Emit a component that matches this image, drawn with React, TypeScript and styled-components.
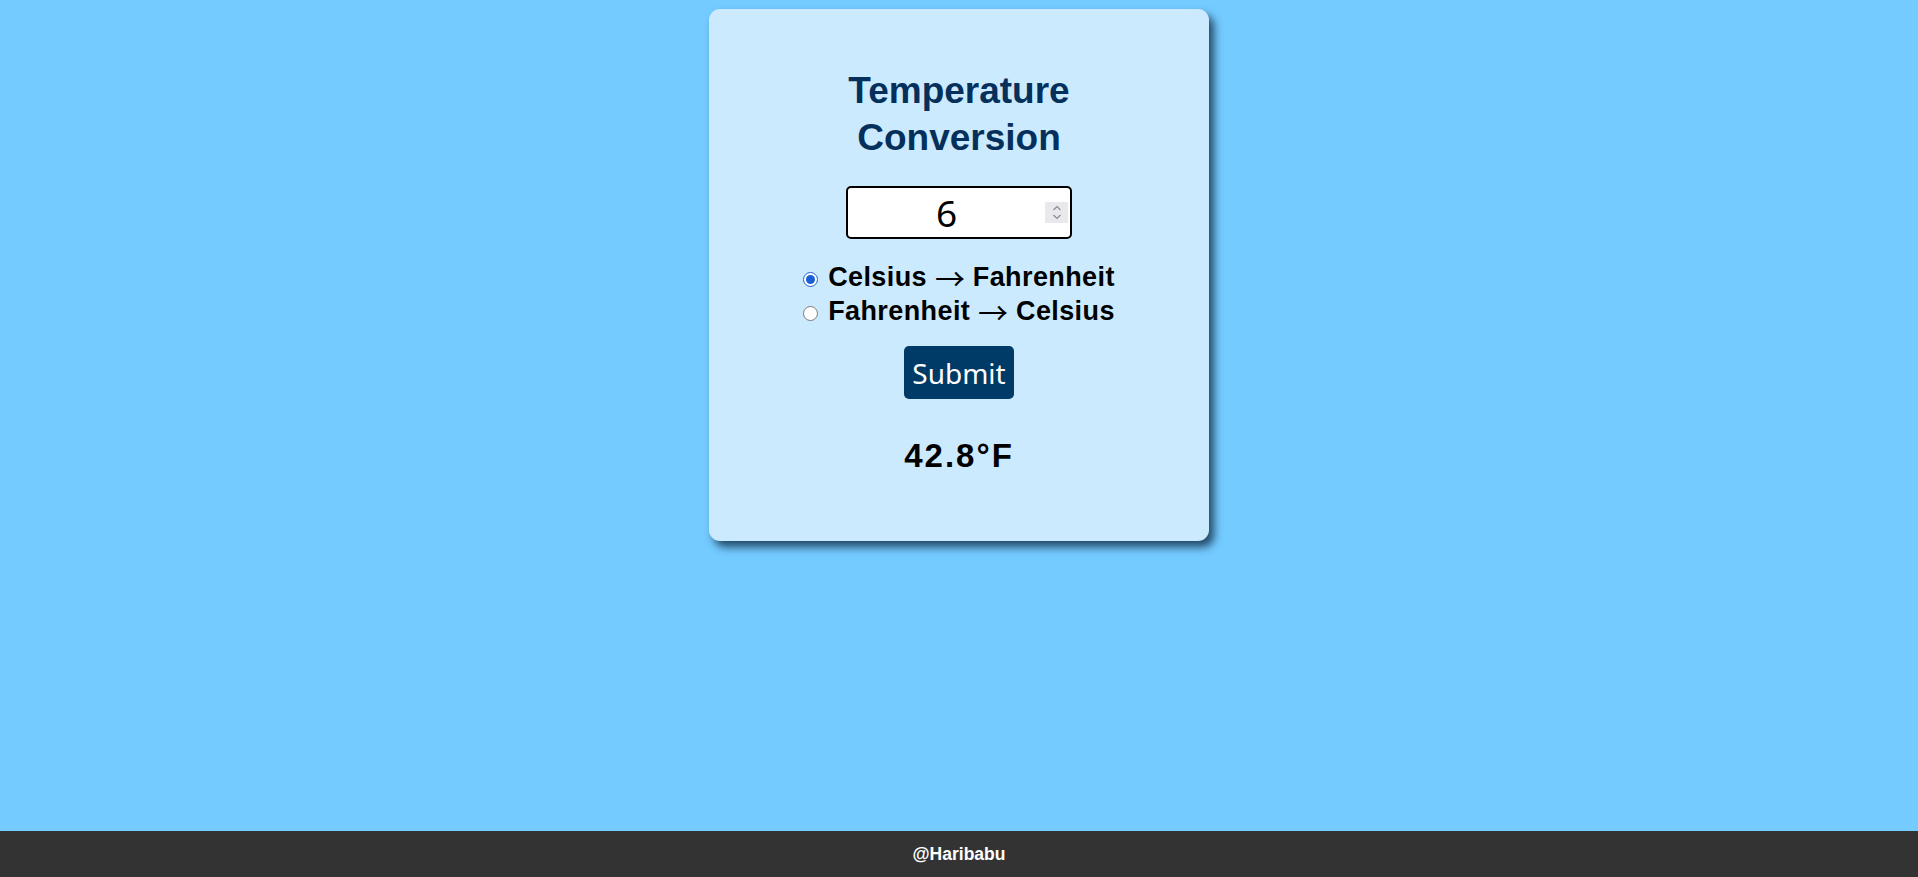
import React, { useState } from 'react';
import styled, { createGlobalStyle } from 'styled-components';

const GlobalStyle = createGlobalStyle`
  html, body {
    margin: 0;
    padding: 0;
    background: #73cbff;
    font-family: 'Liberation Sans', Arial, sans-serif;
  }
  #root {
    min-height: 100vh;
    display: flex;
    flex-direction: column;
  }
`;

const Main = styled.main`
  flex: 1;
  display: flex;
  justify-content: center;
  align-items: flex-start;
  padding-top: 9px;
`;

const Card = styled.section`
  width: 500px;
  box-sizing: border-box;
  padding: 58px 0 65px;
  background: #cceafd;
  border-radius: 11px;
  box-shadow: 5px 6px 9px rgba(0, 20, 40, 0.7);
  display: flex;
  flex-direction: column;
  align-items: center;
`;

const Title = styled.h1`
  margin: 0;
  font-size: 37px;
  line-height: 47px;
  font-weight: 700;
  color: #05305c;
  text-align: center;
  width: 260px;
`;

const InputBox = styled.div`
  margin-top: 25px;
  width: 226px;
  height: 53px;
  box-sizing: border-box;
  border: 2px solid #000;
  border-radius: 5px;
  background: #fff;
  display: flex;
  align-items: center;
  padding-right: 2px;
`;

const NumberInput = styled.input`
  flex: 1;
  min-width: 0;
  height: 100%;
  border: none;
  outline: none;
  background: transparent;
  text-align: center;
  font-family: 'Noto Sans', 'Open Sans', sans-serif;
  font-size: 37px;
  color: #000;
  padding: 0;
  -moz-appearance: textfield;
  &::-webkit-inner-spin-button,
  &::-webkit-outer-spin-button {
    -webkit-appearance: none;
    margin: 0;
  }
`;

const Spinner = styled.div`
  width: 23px;
  height: 21px;
  background: #e9e9ed;
  display: flex;
  align-items: center;
  justify-content: center;
  cursor: pointer;
`;

const Options = styled.div`
  margin-top: 21px;
  display: flex;
  flex-direction: column;
  align-items: flex-start;
`;

const Option = styled.label`
  height: 34px;
  display: flex;
  align-items: center;
  gap: 10px;
  font-size: 27px;
  line-height: 34px;
  font-weight: 700;
  letter-spacing: 0.4px;
  color: #000;
  cursor: pointer;

  input {
    width: 15px;
    height: 15px;
    margin: 4px 0 0 0;
    accent-color: #1a5fd6;
  }
`;

const Arrow = styled.span`
  font-family: 'Noto Sans CJK JP', 'DejaVu Sans', sans-serif;
  font-weight: 400;
  font-size: 30px;
  line-height: 1;
  letter-spacing: 0;
  vertical-align: -4px;
`;

const SubmitButton = styled.button`
  margin-top: 18px;
  width: 110px;
  height: 53px;
  border: none;
  border-radius: 5px;
  background: #003a67;
  color: #fff;
  font-family: 'Noto Sans', 'Open Sans', sans-serif;
  font-size: 28px;
  padding: 0;
  cursor: pointer;
`;

const Result = styled.div`
  margin-top: 37px;
  font-size: 33px;
  line-height: 40px;
  font-weight: 700;
  letter-spacing: 2px;
  color: #000;
`;

const Footer = styled.footer`
  height: 46px;
  background: #333;
  color: #fff;
  display: flex;
  align-items: center;
  justify-content: center;
  font-size: 17.5px;
  font-weight: 700;
`;

type Mode = 'c2f' | 'f2c';

const convert = (value: number, mode: Mode) =>
  mode === 'c2f' ? `${+(value * 9 / 5 + 32).toFixed(2)}°F` : `${+((value - 32) * 5 / 9).toFixed(2)}°C`;

export default function App() {
  const [value, setValue] = useState('6');
  const [mode, setMode] = useState<Mode>('c2f');
  const [result, setResult] = useState(convert(6, 'c2f'));

  const step = (d: number) => setValue(String((parseFloat(value) || 0) + d));

  return (
    <>
      <GlobalStyle />
      <Main>
        <Card>
          <Title>Temperature Conversion</Title>
          <InputBox>
            <NumberInput type='number' value={value} onChange={(e) => setValue(e.target.value)} />
            <Spinner>
              <svg width='10' height='15' viewBox='0 0 10 15' fill='none' stroke='#8a8a90' strokeWidth='1.2'>
                <path d='M1.5 5 L5 1.5 L8.5 5' onClick={() => step(1)} />
                <path d='M1.5 10 L5 13.5 L8.5 10' onClick={() => step(-1)} />
              </svg>
            </Spinner>
          </InputBox>
          <Options>
            <Option>
              <input type='radio' name='mode' checked={mode === 'c2f'} onChange={() => setMode('c2f')} />
              <span>Celsius <Arrow>→</Arrow> Fahrenheit</span>
            </Option>
            <Option>
              <input type='radio' name='mode' checked={mode === 'f2c'} onChange={() => setMode('f2c')} />
              <span>Fahrenheit <Arrow>→</Arrow> Celsius</span>
            </Option>
          </Options>
          <SubmitButton onClick={() => setResult(convert(parseFloat(value) || 0, mode))}>Submit</SubmitButton>
          <Result>{result}</Result>
        </Card>
      </Main>
      <Footer>@Haribabu</Footer>
    </>
  );
}
